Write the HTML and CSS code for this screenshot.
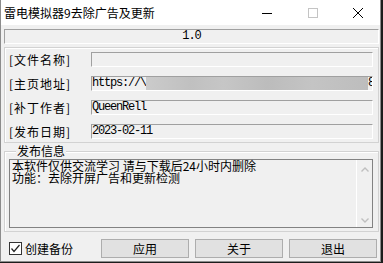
FILE: index.html
```html
<!DOCTYPE html>
<html lang="zh-CN">
<head>
  <meta charset="UTF-8" />
  <title>雷电模拟器9去除广告及更新</title>
  <link rel="stylesheet" href="styles.css">
</head>
<body>

<div class="window">
  <!-- Заголовок окна -->
  <div class="titlebar">
    <span class="title">雷电模拟器9去除广告及更新</span>
    <div class="caption">
      <span class="cap-btn">
        <svg width="10" height="10" viewBox="0 0 10 10"><path d="M0 5.5H10" stroke="#000" stroke-width="1"/></svg>
      </span>
      <span class="cap-btn">
        <svg width="10" height="10" viewBox="0 0 10 10"><rect x="0.5" y="0.5" width="9" height="9" fill="none" stroke="#c4c4c4"/></svg>
      </span>
      <span class="cap-btn close">
        <svg width="10" height="10" viewBox="0 0 10 10"><path d="M0 0L10 10M10 0L0 10" stroke="#000" stroke-width="1"/></svg>
      </span>
    </div>
  </div>

  <div class="content">
    <div class="version">1.0</div>

    <!-- Поля -->
    <div class="group info-group">
      <div class="row">
        <span class="label">[文件名称]</span>
        <div class="field"></div>
      </div>
      <div class="row">
        <span class="label">[主页地址]</span>
        <div class="field">
          <span class="url">https://\</span>
          <span class="blurred"></span>
          <span class="url-tail">8</span>
        </div>
      </div>
      <div class="row">
        <span class="label">[补丁作者]</span>
        <div class="field">QueenRell</div>
      </div>
      <div class="row">
        <span class="label">[发布日期]</span>
        <div class="field">2023-02-11</div>
      </div>
    </div>

    <!-- Описание -->
    <div class="group notes-group">
      <span class="legend">发布信息</span>
      <div class="memo">
        <div class="memo-text">本软件仅供交流学习 请与下载后24小时内删除<br>功能：去除开屏广告和更新检测</div>
        <div class="scrollbar">
          <svg width="8" height="5" viewBox="0 0 8 5"><path d="M0.5 4.5L4 1L7.5 4.5" fill="none" stroke="#bfbfbf" stroke-width="1.4"/></svg>
          <svg width="8" height="5" viewBox="0 0 8 5"><path d="M0.5 0.5L4 4L7.5 0.5" fill="none" stroke="#bfbfbf" stroke-width="1.4"/></svg>
        </div>
      </div>
    </div>

    <div class="footer">
      <label class="check">
        <span class="box">
          <svg width="11" height="11" viewBox="0 0 11 11"><path d="M1.5 5.5L4 8.5L9.5 2" fill="none" stroke="#222" stroke-width="1.2"/></svg>
        </span>
        创建备份
      </label>
      <div class="buttons">
        <button>应用</button>
        <button>关于</button>
        <button>退出</button>
      </div>
    </div>
  </div>
</div>

</body>
</html>
```

FILE: styles.css
```css
* {
  box-sizing: border-box;
  margin: 0;
  padding: 0;
}

body {
  width: 383px;
  height: 263px;
  background: #1c1c1c;
  font-family: "Noto Sans CJK SC", "Liberation Sans", sans-serif;
  font-size: 12px;
  color: #000;
  overflow: hidden;
}

.window {
  width: 381px;
  height: 262px;
  background: #f0f0f0;
  border: 1px solid #8c8c8c;
  border-top: none;
  display: flex;
  flex-direction: column;
}

.titlebar {
  height: 25px;
  background: #fff;
  display: flex;
  align-items: center;
}

.title {
  padding-left: 3px;
  line-height: 14px;
}

.caption {
  margin-left: auto;
  display: flex;
  height: 100%;
}

.cap-btn {
  width: 46px;
  display: flex;
  align-items: center;
  justify-content: center;
}

.cap-btn.close {
  width: 44px;
}

.content {
  padding: 4px 1px 0 3px;
  display: flex;
  flex-direction: column;
}

.version {
  height: 15px;
  border: 1px solid;
  border-color: #a0a0a0 #fff #fff #a0a0a0;
  font-family: "Liberation Mono", monospace;
  font-size: 12px;
  letter-spacing: -1px;
  line-height: 13px;
  text-align: center;
}

.group {
  border: 1px solid #d2d2d2;
  box-shadow: inset 1px 1px 0 #fff;
}

.info-group {
  margin-top: 3px;
  height: 96px;
  padding: 4px 5px 0 4px;
  display: flex;
  flex-direction: column;
  gap: 9px;
}

.row {
  display: flex;
  align-items: center;
  height: 15px;
}

.label {
  width: 82px;
  letter-spacing: 1px;
  line-height: 14px;
}

.field {
  flex: 1;
  height: 15px;
  border: 1px solid;
  border-color: #a0a0a0 #fff #fff #a0a0a0;
  font-family: "Liberation Mono", monospace;
  font-size: 12px;
  letter-spacing: -1.2px;
  line-height: 13px;
  display: flex;
  overflow: hidden;
  white-space: nowrap;
}

.blurred {
  flex: 1;
  background: linear-gradient(90deg, #cbcbcb, #c0c0c0 20%, #c6c6c6 35%, #bcbcbc 55%, #c4c4c4 75%, #bdbdbd);
}

.url-tail {
  width: 4px;
  overflow: hidden;
}

.notes-group {
  margin-top: 8px;
  height: 81px;
  padding: 0 5px 0 4px;
}

.legend {
  display: block;
  width: fit-content;
  margin: -8px 0 0 7px;
  padding: 0 1px;
  background: #f0f0f0;
  line-height: 14px;
}

.memo {
  margin-top: 1px;
  height: 69px;
  border: 1px solid #828282;
  display: flex;
}

.memo-text {
  flex: 1;
  padding-left: 2px;
  line-height: 12px;
}

.scrollbar {
  width: 16px;
  border-left: 1px solid #fff;
  display: flex;
  flex-direction: column;
  align-items: center;
  justify-content: space-between;
  padding: 7px 0 4px;
}

.footer {
  margin-top: 7px;
  display: flex;
  align-items: center;
}

.check {
  display: flex;
  align-items: center;
  gap: 3px;
  margin-left: 5px;
  line-height: 14px;
}

.box {
  width: 13px;
  height: 13px;
  border: 1px solid #333;
  background: #fff;
  display: flex;
}

.buttons {
  margin-left: auto;
  margin-right: 2px;
  display: flex;
  gap: 6px;
}

.buttons button {
  width: 88px;
  height: 19px;
  border: 1px solid #adadad;
  background: #e1e1e1;
  font-family: "Noto Sans CJK SC", sans-serif;
  font-size: 12px;
  line-height: 15px;
  color: #000;
}
```
